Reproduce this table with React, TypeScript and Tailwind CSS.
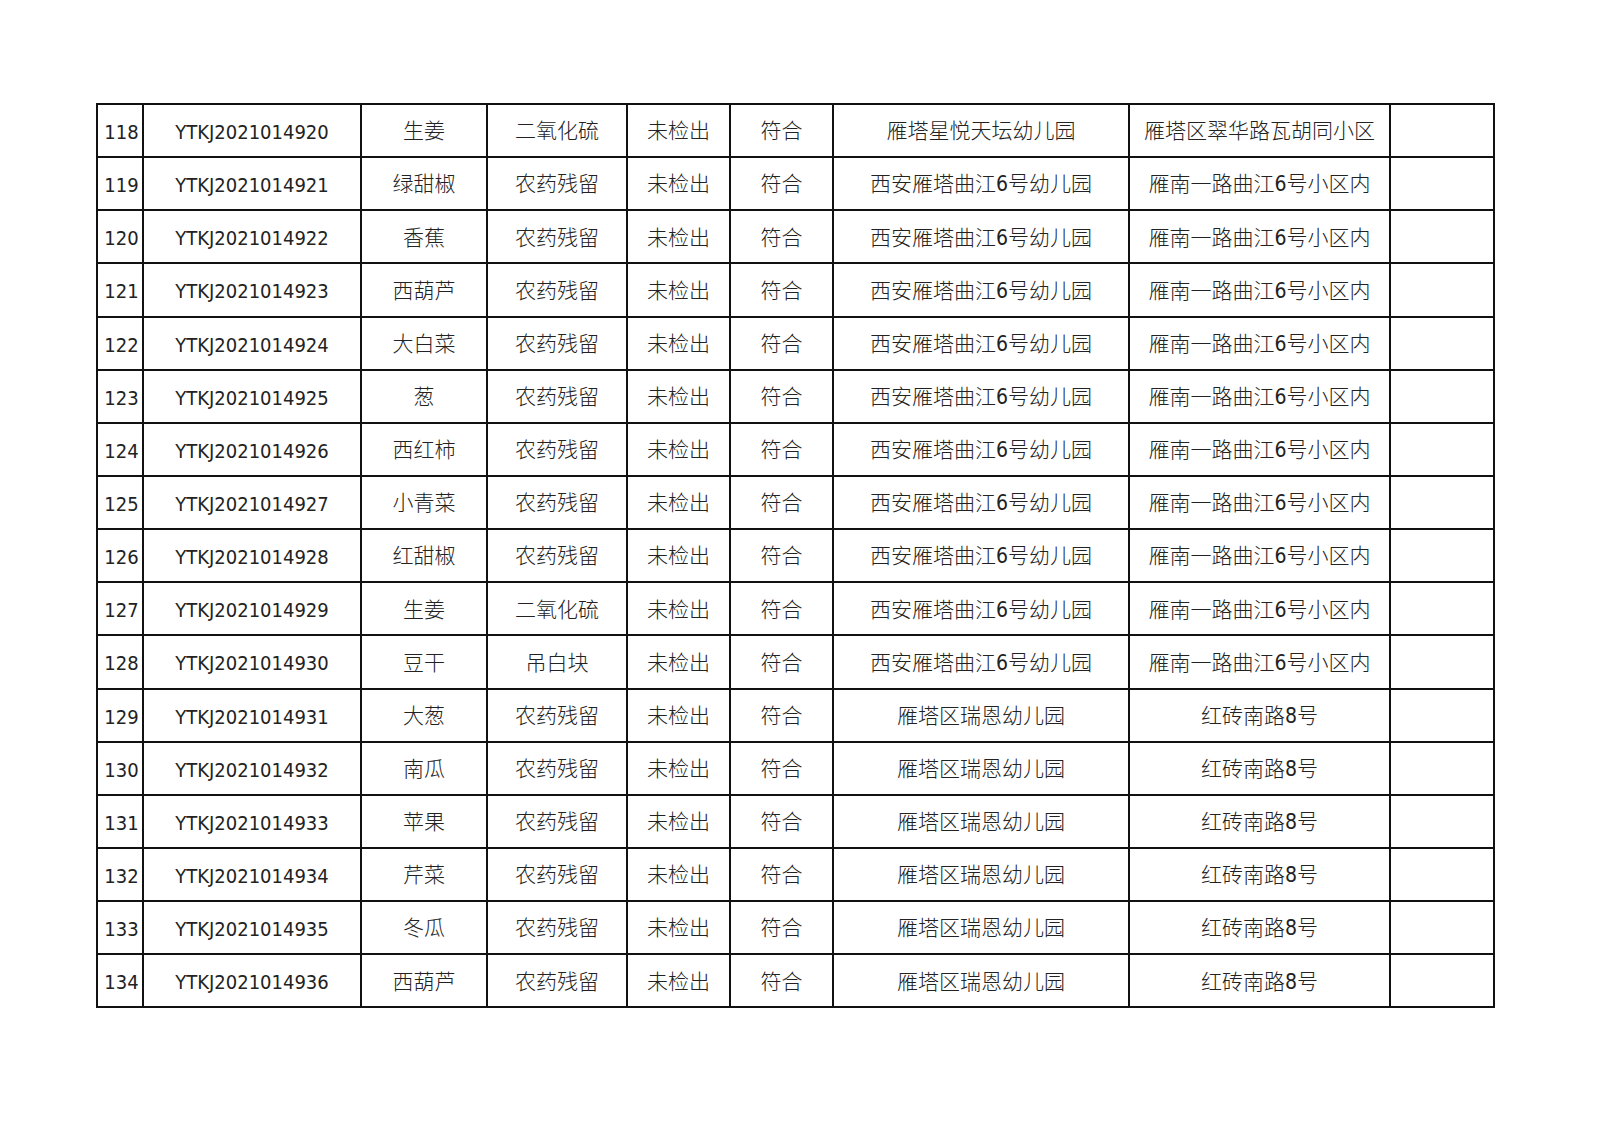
const rows: [number, string, string, string, string, string][] = [
  [118, "YTKJ2021014920", "生姜", "二氧化硫", "雁塔星悦天坛幼儿园", "雁塔区翠华路瓦胡同小区"],
  [119, "YTKJ2021014921", "绿甜椒", "农药残留", "西安雁塔曲江6号幼儿园", "雁南一路曲江6号小区内"],
  [120, "YTKJ2021014922", "香蕉", "农药残留", "西安雁塔曲江6号幼儿园", "雁南一路曲江6号小区内"],
  [121, "YTKJ2021014923", "西葫芦", "农药残留", "西安雁塔曲江6号幼儿园", "雁南一路曲江6号小区内"],
  [122, "YTKJ2021014924", "大白菜", "农药残留", "西安雁塔曲江6号幼儿园", "雁南一路曲江6号小区内"],
  [123, "YTKJ2021014925", "葱", "农药残留", "西安雁塔曲江6号幼儿园", "雁南一路曲江6号小区内"],
  [124, "YTKJ2021014926", "西红柿", "农药残留", "西安雁塔曲江6号幼儿园", "雁南一路曲江6号小区内"],
  [125, "YTKJ2021014927", "小青菜", "农药残留", "西安雁塔曲江6号幼儿园", "雁南一路曲江6号小区内"],
  [126, "YTKJ2021014928", "红甜椒", "农药残留", "西安雁塔曲江6号幼儿园", "雁南一路曲江6号小区内"],
  [127, "YTKJ2021014929", "生姜", "二氧化硫", "西安雁塔曲江6号幼儿园", "雁南一路曲江6号小区内"],
  [128, "YTKJ2021014930", "豆干", "吊白块", "西安雁塔曲江6号幼儿园", "雁南一路曲江6号小区内"],
  [129, "YTKJ2021014931", "大葱", "农药残留", "雁塔区瑞恩幼儿园", "红砖南路8号"],
  [130, "YTKJ2021014932", "南瓜", "农药残留", "雁塔区瑞恩幼儿园", "红砖南路8号"],
  [131, "YTKJ2021014933", "苹果", "农药残留", "雁塔区瑞恩幼儿园", "红砖南路8号"],
  [132, "YTKJ2021014934", "芹菜", "农药残留", "雁塔区瑞恩幼儿园", "红砖南路8号"],
  [133, "YTKJ2021014935", "冬瓜", "农药残留", "雁塔区瑞恩幼儿园", "红砖南路8号"],
  [134, "YTKJ2021014936", "西葫芦", "农药残留", "雁塔区瑞恩幼儿园", "红砖南路8号"],
];

const cell = "border-2 border-[#111] text-center align-middle p-0 pt-[3px] whitespace-nowrap";
const cjk = cell + " font-light text-[21px]";

export default function App() {
  return (
    <div
      className="w-[1600px] h-[1131px] bg-white text-[#222] pt-[103px] pl-[96px]"
      style={{ fontFamily: '"DejaVu Sans Condensed", "DejaVu Sans", "Noto Sans CJK SC", sans-serif' }}
    >
      <table className="table-fixed border-collapse w-[1397px] text-[20px]">
        <colgroup>
          <col className="w-[46px]" />
          <col className="w-[218px]" />
          <col className="w-[126px]" />
          <col className="w-[140px]" />
          <col className="w-[103px]" />
          <col className="w-[103px]" />
          <col className="w-[296px]" />
          <col className="w-[261px]" />
          <col className="w-[104px]" />
        </colgroup>
        <tbody>
          {rows.map((r) => (
            <tr key={r[0]} className="h-[53.15px]">
              <td className={cell + " pl-[3px]"}>{r[0]}</td>
              <td className={cell}>{r[1]}</td>
              <td className={cjk}>{r[2]}</td>
              <td className={cjk}>{r[3]}</td>
              <td className={cjk}>未检出</td>
              <td className={cjk}>符合</td>
              <td className={cjk}>{r[4]}</td>
              <td className={cjk}>{r[5]}</td>
              <td className={cell}></td>
            </tr>
          ))}
        </tbody>
      </table>
    </div>
  );
}
